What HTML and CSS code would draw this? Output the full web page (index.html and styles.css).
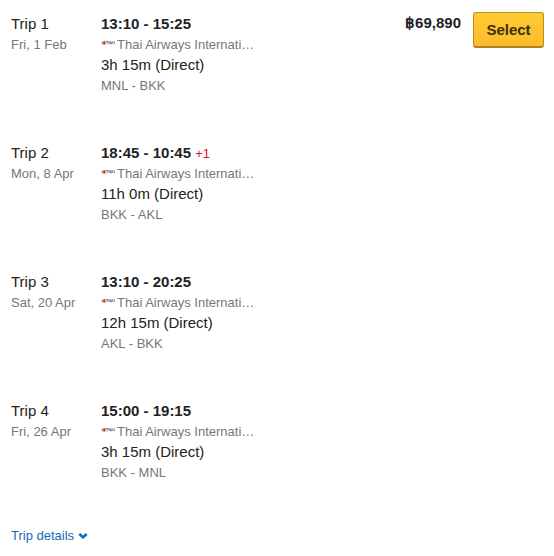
FILE: index.html
```html
<!DOCTYPE html>
<html lang="en">
<head>
    <meta charset="UTF-8">
    <meta name="viewport" content="width=device-width, initial-scale=1.0">
    <title>Flight results</title>
    <link rel="stylesheet" href="styles.css">
</head>
<body>
    <!-- Airline logo, shared by all trips -->
    <svg class="sprite" aria-hidden="true">
        <symbol id="thai-logo" viewBox="0 0 14 6">
            <path d="M0 3 Q1.500 .8 4.500 .4 L4 3 L4.500 5.200 Q1.500 5 0 3Z" fill="#d39150"/>
            <path d="M1.800 3 L4.300 1.600 V4.200Z" fill="#6b2f55"/>
            <path d="M5 1.500h2.400M6.200 1.500v2.700M8 1.200v3M9.700 1.200v3M8 2.700h1.700M10.300 4.200l.9-2.700.9 2.700M13.300 1.200v3" fill="none" stroke="#75608f" stroke-width=".8"/>
        </symbol>
    </svg>

    <main class="fare">
        <div class="trips">
            <section class="trip">
                <div class="trip-day">
                    <div class="line">Trip 1</div>
                    <div class="line-small">Fri, 1 Feb</div>
                </div>
                <div class="trip-info">
                    <div class="line"><strong>13:10 - 15:25</strong></div>
                    <div class="line-small airline"><svg class="logo"><use href="#thai-logo"/></svg><span class="airline-name">Thai Airways International</span></div>
                    <div class="line">3h 15m (Direct)</div>
                    <div class="line-small">MNL - BKK</div>
                </div>
            </section>

            <section class="trip">
                <div class="trip-day">
                    <div class="line">Trip 2</div>
                    <div class="line-small">Mon, 8 Apr</div>
                </div>
                <div class="trip-info">
                    <div class="line"><strong>18:45 - 10:45</strong> <span class="next-day">+1</span></div>
                    <div class="line-small airline"><svg class="logo"><use href="#thai-logo"/></svg><span class="airline-name">Thai Airways International</span></div>
                    <div class="line">11h 0m (Direct)</div>
                    <div class="line-small">BKK - AKL</div>
                </div>
            </section>

            <section class="trip">
                <div class="trip-day">
                    <div class="line">Trip 3</div>
                    <div class="line-small">Sat, 20 Apr</div>
                </div>
                <div class="trip-info">
                    <div class="line"><strong>13:10 - 20:25</strong></div>
                    <div class="line-small airline"><svg class="logo"><use href="#thai-logo"/></svg><span class="airline-name">Thai Airways International</span></div>
                    <div class="line">12h 15m (Direct)</div>
                    <div class="line-small">AKL - BKK</div>
                </div>
            </section>

            <section class="trip">
                <div class="trip-day">
                    <div class="line">Trip 4</div>
                    <div class="line-small">Fri, 26 Apr</div>
                </div>
                <div class="trip-info">
                    <div class="line"><strong>15:00 - 19:15</strong></div>
                    <div class="line-small airline"><svg class="logo"><use href="#thai-logo"/></svg><span class="airline-name">Thai Airways International</span></div>
                    <div class="line">3h 15m (Direct)</div>
                    <div class="line-small">BKK - MNL</div>
                </div>
            </section>

            <a class="details" href="#">Trip details
                <svg class="chevron" viewBox="0 0 10 8" aria-hidden="true"><path d="M1.300 2 L5 5.300 L8.700 2" fill="none" stroke="currentColor" stroke-width="2.600"/></svg>
            </a>
        </div>

        <!-- Price and button -->
        <div class="price-box">
            <strong class="price line">฿69,890</strong>
            <button class="select" type="button">Select</button>
        </div>
    </main>
</body>
</html>
```
FILE: styles.css
```css
body {
    margin: 0;
    background: #fff;
    color: #222;
    font-family: "Liberation Sans", Arial, sans-serif;
    font-size: 15px;
}
.sprite {
    display: none;
}

.fare {
    display: flex;
    justify-content: space-between;
    align-items: flex-start;
    padding: 12px 10px 10px 11px;
}

/* Trips */
.trips {
    display: flex;
    flex-direction: column;
    gap: 47px;
    padding-top: 2px;
}
.trip {
    display: flex;
}
.trip-day {
    width: 90px;
}
.trip-info {
    width: 156px;
}
.line {
    line-height: 20px;
    white-space: nowrap;
}
.line-small {
    padding-top: 1px;
    font-size: 13px;
    line-height: 20px;
    color: #777;
}
.airline {
    display: flex;
    align-items: center;
    gap: 2px;
}
.airline-name {
    min-width: 0;
    overflow: hidden;
    text-overflow: ellipsis;
    white-space: nowrap;
}
.logo {
    flex: none;
    width: 14px;
    height: 6px;
    margin-bottom: 4px;
}
.next-day {
    font-size: 13px;
    line-height: 16px;
    color: #e0142d;
}

.details {
    display: flex;
    align-items: center;
    gap: 4px;
    font-size: 13px;
    line-height: 12px;
    color: #0f6cb6;
    text-decoration: none;
}
.chevron {
    width: 10px;
    height: 8px;
}

/* Price */
.price-box {
    display: flex;
    align-items: flex-start;
    gap: 12px;
}
.price {
    padding-top: 1px;
}
.select {
    width: 71px;
    height: 36px;
    padding: 0;
    border: 1px solid #b8901f;
    border-bottom: 2px solid #a98522;
    border-radius: 3px;
    background: linear-gradient(#ffcb32, #fdbb2b);
    color: #3b2f0b;
    font: bold 15px "Liberation Sans", Arial, sans-serif;
    cursor: pointer;
}
```
